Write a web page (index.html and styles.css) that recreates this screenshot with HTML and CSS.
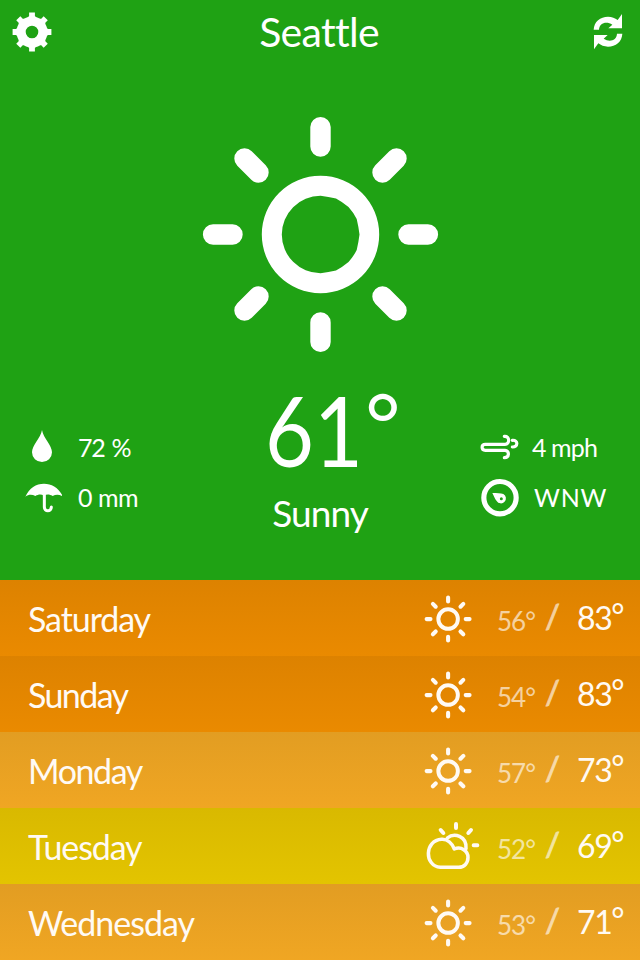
FILE: index.html
```html
<!DOCTYPE html>
<html lang="en">
<head>
<meta charset="utf-8">
<title>Seattle weather</title>
<link rel="stylesheet" href="styles.css">
</head>
<body>
<svg class="defs" aria-hidden="true">
  <symbol id="sun" viewBox="-120.5 -120.5 240 240">
    <path fill="currentColor" fill-rule="evenodd" d="M0-58.7A58.7 58.7 0 1 1 0 58.7A58.7 58.7 0 1 1 0-58.7ZM0-38.7Q8-37.8 15.5-36Q22-32.5 28-27.5Q33-22 36.2-15.5Q38-8 39 0Q38 8 36.2 15.5Q33 22 28 27.5Q22 32.5 15.5 36Q8 37.8 0 38.7A38.7 38.7 0 1 1 0-38.7Z"/>
    <path stroke="currentColor" stroke-width="20.4" stroke-linecap="round" d="M0-107.4V-88M0 107.4V88M-107.4 0H-88M107.4 0H88M-76-76L-62-62M76-76L62-62M-76 76L-62 62M76 76L62 62"/>
  </symbol>
</svg>
<main class="app">
  <section class="current">
    <header class="bar">
      <svg class="gear" viewBox="-20 -20 40 40">
        <circle r="10.9" fill="none" stroke="currentColor" stroke-width="9.2"/>
        <g fill="currentColor">
          <path id="tooth" d="M-5.5-13L-2.9-16V-19.4H2.9V-16L5.5-13ZM-5.5 13L-2.9 16V19.4H2.9V16L5.5 13Z"/>
          <use href="#tooth" transform="rotate(45)"/><use href="#tooth" transform="rotate(90)"/><use href="#tooth" transform="rotate(135)"/>
        </g>
      </svg>
      <h1 class="city">Seattle</h1>
      <svg class="refresh" viewBox="97 38 96 114">
        <g fill="currentColor">
          <path id="arrow" d="M102 88C103 64 122 49 145 49C157 49 166 53 174 59L187 41V84H146L158 73C140 61 119 68 118 88Z"/>
          <use href="#arrow" transform="rotate(180 145 94)"/>
        </g>
      </svg>
    </header>
    <svg class="big-sun"><use href="#sun"/></svg>
    <div class="summary">
      <div class="stats left">
        <svg class="stat-icon" viewBox="0 3 120 120"><path fill="currentColor" d="M60 12C64 36 90 58 90 79A30 29 0 0 1 30 79C30 58 56 36 60 12Z"/></svg>
        <span class="humidity">72 %</span>
        <svg class="stat-icon" viewBox="36 171 120 120"><path fill="currentColor" d="M46 230C58 204 78 191 102 191S147 204 159 230C148 223 138 223 128 228C118 222 110 222 102 227C94 222 86 222 76 228C66 223 56 223 46 230Z"/><path fill="none" stroke="currentColor" stroke-width="9" stroke-linecap="round" d="M103 224V261C103 276 124 276 124 261"/></svg>
        <span class="rain">0 mm</span>
      </div>
      <div class="reading">
        <div class="temp"><span class="six">6</span><span class="one">1</span><span class="degree">°</span></div>
        <div class="condition">Sunny</div>
      </div>
      <div class="stats right">
        <svg class="stat-icon" viewBox="31 24 120 120"><path fill="none" stroke="currentColor" stroke-width="9.5" stroke-linecap="round" d="M104 52C121 50 121 76 106 76H47C34 76 34 94 47 94H106C120 95 120 116 104 116M128 64C146 62 146 85 128 84"/></svg>
        <span class="wind">4 mph</span>
        <svg class="stat-icon" viewBox="31 172 120 120"><circle cx="91" cy="234" r="48.5" fill="none" stroke="currentColor" stroke-width="15.5"/><path fill="currentColor" fill-rule="evenodd" d="M68 220C82 220 93 220 101 223A15 15 0 1 1 81 244C75 237 73 229 68 220ZM95 233A4.5 4.5 0 1 0 95 242A4.5 4.5 0 1 0 95 233Z"/></svg>
        <span class="direction">WNW</span>
      </div>
    </div>
  </section>
  <section class="forecast">
    <div class="day hot"><span class="name sat">Saturday</span><svg class="icon"><use href="#sun"/></svg><span class="low">56°</span><span class="slash">/</span><span class="high">83<i>°</i></span></div>
    <div class="day hot"><span class="name sun">Sunday</span><svg class="icon"><use href="#sun"/></svg><span class="low">54°</span><span class="slash">/</span><span class="high">83<i>°</i></span></div>
    <div class="day warm"><span class="name mon">Monday</span><svg class="icon"><use href="#sun"/></svg><span class="low">57°</span><span class="slash">/</span><span class="high">73<i>°</i></span></div>
    <div class="day mild"><span class="name tue">Tuesday</span>
      <svg class="cloud" viewBox="42 255 171 156"><g fill="none" stroke="currentColor" stroke-width="10.5" stroke-linecap="round" stroke-linejoin="round"><path d="M91 397C42 393 43 316 95 313C112 312 126 325 133 342C154 333 174 348 174 367C174 384 163 397 146 397Z"/><path d="M112 309C132 292 171 302 168 341"/><path stroke-width="12" d="M138 267V279M92 285L100 294M183 285L175 294M191 331H202"/></g></svg>
      <span class="low">52°</span><span class="slash">/</span><span class="high">69<i>°</i></span></div>
    <div class="day warm"><span class="name wed">Wednesday</span><svg class="icon"><use href="#sun"/></svg><span class="low">53°</span><span class="slash">/</span><span class="high">71<i>°</i></span></div>
  </section>
</main>
</body>
</html>
```
FILE: styles.css
```css
* { box-sizing: border-box; }
body { margin: 0; font-family: Lato, "Liberation Sans", sans-serif; color: #fff; }
.defs { display: none; }
.app { width: 640px; height: 960px; overflow: hidden; }
.app svg { display: block; }
.current { height: 580px; background: #1fa214; }
.bar { display: grid; grid-template-columns: 100px 1fr 100px; height: 114px; }
.gear { width: 40px; height: 40px; margin: 12px 0 0 12px; }
.refresh { width: 32px; height: 38px; margin: 13px 0 0 52px; }
.city { margin: 8px 2px 0 0; text-align: center; font-weight: 400; font-size: 41px; line-height: 48px; letter-spacing: -0.7px; }
.big-sun { width: 240px; height: 240px; margin: 0 0 0 200px; }
.summary { display: grid; grid-template-columns: 230px 180px 230px; margin-top: 26px; }
.stats { display: grid; grid-auto-rows: 50px; align-items: center; align-content: start; padding-top: 42px; font-size: 25px; line-height: 30px; white-space: nowrap; }
.left { grid-template-columns: 56px 1fr; padding-left: 22px; }
.right { grid-template-columns: 52px 1fr; padding-left: 70px; }
.stat-icon { width: 40px; height: 40px; }
.humidity { letter-spacing: -1.3px; word-spacing: 2px; }
.rain { letter-spacing: -0.5px; }
.wind { letter-spacing: -0.9px; }
.direction { letter-spacing: 0.8px; padding-left: 2px; }
.temp { display: grid; grid-template-columns: 49px 51px 1fr; height: 110px; padding-left: 35px; font-size: 96px; line-height: 99px; }
.six, .one { transform: scaleX(.88); transform-origin: 0 0; }
.degree { font-size: 86px; line-height: 86px; }
.condition { text-align: center; font-size: 37px; line-height: 46px; letter-spacing: -0.9px; }
.day { display: grid; grid-template-columns: 396px 74px 49px 30px 1fr; height: 76px; padding-left: 28px; align-items: start; color: #fffaf4; }
.hot { background: linear-gradient(#dd8200, #ea8a00); }
.warm { background: linear-gradient(#e29d22, #f0a623); }
.mild { background: linear-gradient(#d9b900, #e3c400); }
.name { font-size: 34px; line-height: 42px; padding-top: 18px; }
.sat, .tue { letter-spacing: -1.1px; }
.sun { letter-spacing: -1.6px; }
.mon { letter-spacing: -1.4px; }
.wed { letter-spacing: -1px; }
.icon { width: 48px; height: 48px; margin-top: 15px; }
.cloud { width: 57px; height: 52px; margin-top: 12px; }
.low { font-size: 26px; line-height: 32px; padding-top: 25px; margin-left: -1px; letter-spacing: -1px; opacity: .65; }
.slash { font-size: 33px; line-height: 40px; padding-top: 15px; margin-left: -2px; opacity: .65; -webkit-text-stroke: 0.8px; }
.high { font-size: 32px; line-height: 40px; padding-top: 18px; letter-spacing: -1.2px; }
.high i { display: inline-block; font-style: normal; line-height: 30px; transform: translate(-0.5px, -3px); }
```
